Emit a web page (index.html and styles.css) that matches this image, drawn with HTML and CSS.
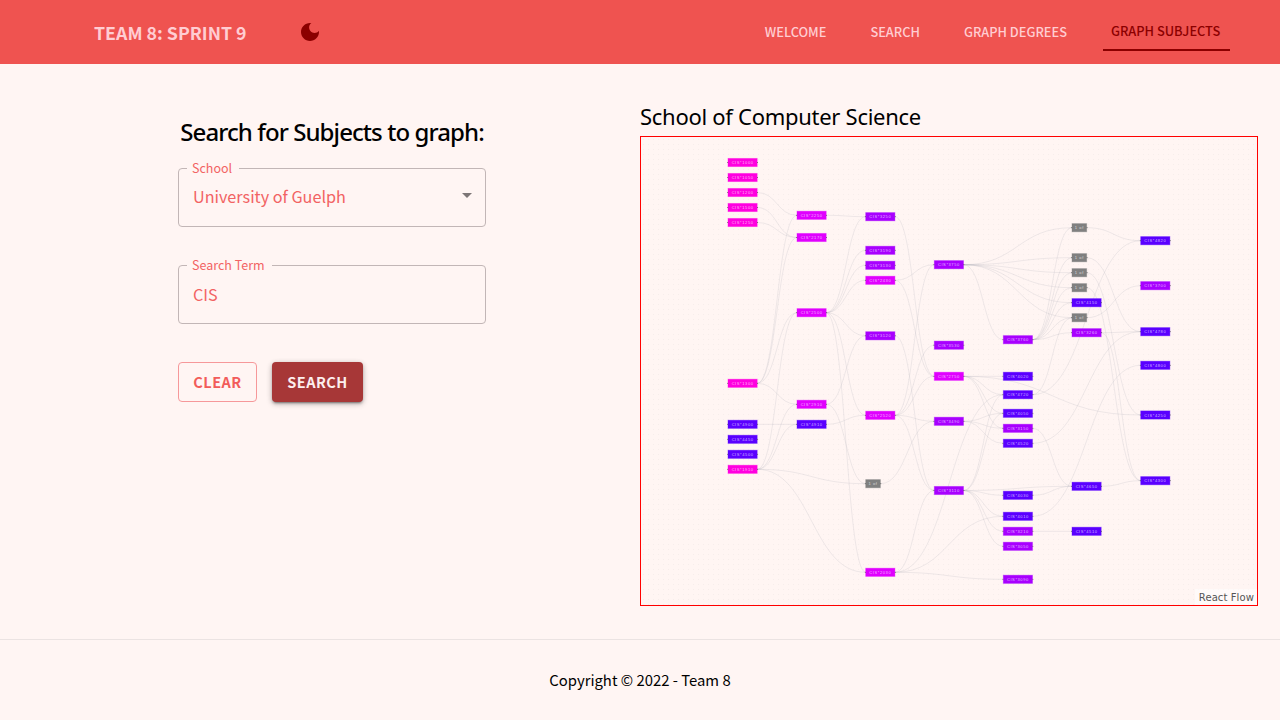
FILE: index.html
```html
<!DOCTYPE html>
<html lang="en">
<head>
  <meta charset="UTF-8">
  <title>Team 8: Sprint 9</title>
  <link rel="stylesheet" href="styles.css">
</head>
<body>

<header class="topbar">
  <div class="brand">
    <span class="brand-name">TEAM 8: SPRINT 9</span>
    <svg class="moon" viewBox="0 0 24 24" width="24" height="24"><path d="M12 3c-4.97 0-9 4.03-9 9s4.03 9 9 9 9-4.03 9-9c0-.46-.04-.92-.1-1.36-.98 1.37-2.58 2.26-4.4 2.26-2.98 0-5.4-2.42-5.4-5.4 0-1.81.89-3.42 2.26-4.4-.44-.06-.9-.1-1.36-.1z"/></svg>
  </div>
  <nav class="nav">
    <a class="nav-link">WELCOME</a>
    <a class="nav-link">SEARCH</a>
    <a class="nav-link">GRAPH DEGREES</a>
    <a class="nav-link active">GRAPH SUBJECTS</a>
  </nav>
</header>

<main class="content">
  <!-- SEARCH FORM -->
  <section class="search">
    <h2 class="search-title">Search for Subjects to graph:</h2>
    <form class="search-form">
      <fieldset class="field">
        <legend>School</legend>
        <div class="field-value select-value">University of Guelph<span class="caret"></span></div>
      </fieldset>
      <fieldset class="field">
        <legend>Search Term</legend>
        <div class="field-value">CIS</div>
      </fieldset>
      <div class="buttons">
        <button type="button" class="btn btn-clear">CLEAR</button>
        <button type="button" class="btn btn-search">SEARCH</button>
      </div>
    </form>
  </section>

  <!-- GRAPH -->
  <section class="graph">
    <h3 class="graph-title">School of Computer Science</h3>
    <div class="flow">
      <svg id="flow-svg" class="flow-svg" viewBox="641 137 616 468" width="616" height="468"></svg>
      <span class="attribution">React Flow</span>
    </div>
  </section>
</main>

<footer class="footer">Copyright © 2022 - Team 8</footer>

<script src="graph.js"></script>
</body>
</html>
```

FILE: styles.css
```css
* {
    box-sizing: border-box;
}

body {
    margin: 0;
    height: 720px;
    overflow: hidden;
    background-color: #fff5f3;
    font-family: "Noto Sans CJK SC", "Noto Sans", sans-serif;
}

/* top bar */
.topbar {
    height: 64px;
    padding: 0 50px 0 94px;
    display: flex;
    align-items: center;
    justify-content: space-between;
    background-color: #ef5350;
}

.brand {
    display: flex;
    align-items: center;
    gap: 51px;
}

.brand-name {
    font-size: 17.75px;
    line-height: 23px;
    font-weight: 700;
    white-space: nowrap;
    color: #ffcdd2;
}

.moon {
    fill: #8b0000;
    display: block;
}

.nav {
    display: flex;
    gap: 28px;
    height: 64px;
    align-items: center;
}

.nav-link {
    padding: 0 8px;
    height: 38px;
    line-height: 38px;
    font-size: 12.8px;
    font-weight: 500;
    white-space: nowrap;
    color: #ffcdd2;
    border-bottom: 2px solid transparent;
}

.nav-link.active {
    width: 127px;
    line-height: 36px;
    color: #8b0000;
    border-bottom-color: #8b0000;
}

/* main area */
.content {
    height: 575px;
    padding-left: 24px;
    display: grid;
    grid-template-columns: 616px 618px;
}

.search {
    padding-top: 52px;
    display: flex;
    flex-direction: column;
    align-items: center;
}

.search-title {
    margin: 0;
    font-family: "Noto Sans", sans-serif;
    font-size: 24px;
    line-height: 32px;
    font-weight: 500;
    letter-spacing: -0.92px;
    color: #000;
}

.search-form {
    width: 308px;
    margin-top: 14px;
}

.field {
    margin: 0 0 32px;
    padding: 0 14px;
    height: 65px;
    border: 1px solid #c2b6b6;
    border-radius: 4px;
    min-width: 0;
}

.field legend {
    margin-left: -6px;
    padding: 0 7px 0 5px;
    font-size: 12.5px;
    line-height: 12px;
    color: #f26363;
}

.field-value {
    height: 45px;
    display: flex;
    align-items: center;
    justify-content: space-between;
    font-size: 16.2px;
    color: #f26363;
}

.select-value {
    height: 43px;
}

.caret {
    width: 0;
    height: 0;
    margin-right: -1px;
    border-left: 5px solid transparent;
    border-right: 5px solid transparent;
    border-top: 5px solid #7d7676;
}

.buttons {
    margin-top: 38px;
    display: flex;
    gap: 15px;
}

.btn {
    height: 40px;
    padding: 0 0 2px;
    border-radius: 4px;
    font-family: inherit;
    font-size: 14.5px;
    font-weight: 700;
    letter-spacing: 0.5px;
}

.btn-clear {
    width: 79px;
    background: none;
    border: 1px solid #f6989a;
    color: #f25c5a;
}

.btn-search {
    width: 91px;
    border: none;
    background-color: #a73737;
    color: #fdeeee;
    box-shadow: 0 3px 1px -2px rgba(0,0,0,.2), 0 2px 2px 0 rgba(0,0,0,.14), 0 1px 5px 0 rgba(0,0,0,.12), 0 2px 6px rgba(0,0,0,.2);
}

.graph {
    padding-top: 37px;
}

.graph-title {
    margin: 0;
    font-family: "Noto Sans", sans-serif;
    font-size: 22px;
    line-height: 30px;
    font-weight: 400;
    letter-spacing: -0.28px;
    color: #000;
}

.flow {
    position: relative;
    width: 618px;
    height: 470px;
    margin-top: 5px;
    border: 1px solid #f00;
    background-image: radial-gradient(circle, rgba(129,129,138,.07) .5px, transparent .6px);
    background-size: 5px 5px;
    overflow: hidden;
}

.flow-svg {
    display: block;
}

.edge {
    fill: none;
    stroke: #b1b1b7;
    stroke-width: .9;
    opacity: .24;
}

.node-box {
    stroke-width: .9;
    stroke-opacity: .4;
}

.handle {
    fill: #555;
}

.node-label {
    font-family: "Liberation Sans", sans-serif;
    font-size: 4px;
    letter-spacing: .6px;
    fill: #fff;
    fill-opacity: .7;
    text-anchor: middle;
    dominant-baseline: central;
}

.attribution {
    position: absolute;
    right: 0;
    bottom: 0;
    padding: 3px 3px 1px 4px;
    font-family: "DejaVu Sans", sans-serif;
    font-size: 10px;
    line-height: 12px;
    letter-spacing: .1px;
    color: #555;
    background-color: rgba(255, 255, 255, .5);
}

/* footer */
.footer {
    height: 81px;
    padding-top: 30px;
    border-top: 1px solid #ebe3e2;
    font-size: 14.85px;
    line-height: 20px;
    text-align: center;
    color: #000;
}
```

FILE: graph.js
```js
var COLORS = { p: "#ff00e0", m: "#e000ff", v: "#a800ff", b: "#5a00ff", g: "#808080" };

// name, colour, left x, centre y
var nodes = {
  a1000: ["CIS*1000", "p", 728, 162.5], a1050: ["CIS*1050", "p", 728, 177.5],
  a1200: ["CIS*1200", "p", 728, 192.5], a1500: ["CIS*1500", "p", 728, 207.5],
  a1250: ["CIS*1250", "p", 728, 222.5], a1300: ["CIS*1300", "p", 728, 383.3],
  a4900: ["CIS*4900", "b", 728, 424.3], a4450: ["CIS*4450", "b", 728, 439.3],
  a4500: ["CIS*4500", "b", 728, 454.3], a1910: ["CIS*1910", "p", 728, 469.3],

  b2250: ["CIS*2250", "m", 797, 215.3], b2170: ["CIS*2170", "m", 797, 237.5],
  b2500: ["CIS*2500", "m", 797, 312.7], b2910: ["CIS*2910", "m", 797, 404.3],
  b4910: ["CIS*4910", "b", 797, 424.3],

  c3250: ["CIS*3250", "v", 865.7, 216.7], c3190: ["CIS*3190", "v", 865.7, 250.3],
  c3130: ["CIS*3130", "v", 865.7, 265.3], c2430: ["CIS*2430", "m", 865.7, 280.3],
  c3120: ["CIS*3120", "v", 865.7, 335.8], c2520: ["CIS*2520", "m", 865.7, 415.3],
  cg: ["1 of", "g", 865.7, 483.7], c2030: ["CIS*2030", "m", 865.7, 572.3],

  d3750: ["CIS*3750", "v", 934.3, 264.7], d3530: ["CIS*3530", "v", 934.3, 345.2],
  d2750: ["CIS*2750", "m", 934.3, 376.3], d3490: ["CIS*3490", "v", 934.3, 421.3],
  d3110: ["CIS*3110", "v", 934.3, 490.5],

  e3760: ["CIS*3760", "v", 1003.3, 339.7], e4020: ["CIS*4020", "b", 1003.3, 376.3],
  e4720: ["CIS*4720", "b", 1003.3, 394.7], e4050: ["CIS*4050", "b", 1003.3, 413.3],
  e3150: ["CIS*3150", "v", 1003.3, 428.3], e4520: ["CIS*4520", "b", 1003.3, 443.3],
  e4030: ["CIS*4030", "b", 1003.3, 495.3], e4010: ["CIS*4010", "b", 1003.3, 516.3],
  e3210: ["CIS*3210", "v", 1003.3, 531.3], e3050: ["CIS*3050", "v", 1003.3, 546.3],
  e3090: ["CIS*3090", "v", 1003.3, 579.3],

  fg1: ["1 of", "g", 1072, 227.7], fg2: ["1 of", "g", 1072, 257.7],
  fg3: ["1 of", "g", 1072, 272.7], fg4: ["1 of", "g", 1072, 287.7],
  f4150: ["CIS*4150", "b", 1072, 302.7], fg5: ["1 of", "g", 1072, 317.7],
  f3260: ["CIS*3260", "v", 1072, 332.7], f4650: ["CIS*4650", "b", 1072, 486.3],
  f4510: ["CIS*4510", "b", 1072, 531.3],

  h4820: ["CIS*4820", "b", 1140.7, 240.7], h3700: ["CIS*3700", "v", 1140.7, 285.7],
  h4780: ["CIS*4780", "b", 1140.7, 331.7], h4800: ["CIS*4800", "b", 1140.7, 365.3],
  h4250: ["CIS*4250", "b", 1140.7, 415], h4300: ["CIS*4300", "b", 1140.7, 480.7]
};

var edges = [
  "a1200 b2250", "a1500 b2170", "a1250 b2170", "a1300 b2250", "a1300 b2170", "a1300 b2500",
  "a1300 b2910", "a1910 b2910", "a1910 b2500", "a1910 b4910", "a4900 b4910", "a1910 cg", "a1910 c2030",
  "b2250 c3250", "b2500 c3250", "b2500 c3190", "b2500 c3130", "b2500 c2430", "b2500 c3120",
  "b2500 c2520", "b2500 c2030", "b2910 cg", "b2910 c3120", "b4910 c2520",
  "c3250 d2750", "c2430 d3750", "c2430 d2750", "c3120 d3110", "c2520 d3750", "c2520 d3530",
  "c2520 d2750", "c2520 d3490", "c2520 d3110", "cg d3490", "c2030 d3110", "c2030 e4720",
  "c2030 e4010", "c2030 e3090",
  "d3750 fg1", "d3750 fg2", "d3750 fg3", "d3750 fg4", "d3750 f4150", "d3750 fg5", "d3750 e3760",
  "d2750 e4020", "d2750 e4720", "d2750 e4050", "d2750 e3150", "d2750 h4250",
  "d3490 e4050", "d3490 e3150", "d3490 e4520",
  "d3110 e4720", "d3110 e4050", "d3110 e4030", "d3110 e4010", "d3110 e3210", "d3110 e3050",
  "d3110 f4650",
  "e3760 fg1", "e3760 fg2", "e3760 fg3", "e3760 fg4", "e3760 fg5", "e3760 f3260", "e3760 f4150",
  "e3150 f4650", "e4030 f4650", "e3210 f4510", "e4720 fg5", "e4520 h4780", "e4010 h4800",
  "fg1 h4820", "fg2 h4780", "fg3 h4250", "fg4 h4300", "fg5 h3700", "f3260 h4780",
  "f3260 h4300", "f4650 h4300", "e4720 h4820"
];

var svg = document.getElementById("flow-svg");
var NS = "http://www.w3.org/2000/svg";

function add(tag, attrs, text) {
  var el = document.createElementNS(NS, tag);
  for (var key in attrs) {
    el.setAttribute(key, attrs[key]);
  }
  if (text) {
    el.textContent = text;
  }
  svg.appendChild(el);
  return el;
}

function nodeWidth(n) {
  return n[1] === "g" ? 14.7 : 29.2;
}

edges.forEach(function (edge) {
  var ids = edge.split(" ");
  var s = nodes[ids[0]];
  var t = nodes[ids[1]];
  var sx = s[2] + nodeWidth(s);
  var tx = t[2];
  var mid = (sx + tx) / 2;
  add("path", {
    "class": "edge",
    d: "M" + sx + "," + s[3] + " C" + mid + "," + s[3] + " " + mid + "," + t[3] + " " + tx + "," + t[3]
  });
});

Object.keys(nodes).forEach(function (id) {
  var n = nodes[id];
  var w = nodeWidth(n);
  var color = COLORS[n[1]];
  add("rect", { "class": "node-box", x: n[2], y: n[3] - 4.1, width: w, height: 8.2, fill: color, stroke: color });
  add("rect", { "class": "handle", x: n[2] - .8, y: n[3] - .4, width: .9, height: .8 });
  add("rect", { "class": "handle", x: n[2] + w - .1, y: n[3] - .4, width: .9, height: .8 });
  add("text", { "class": "node-label", x: n[2] + w / 2, y: n[3] }, n[0]);
});
```
